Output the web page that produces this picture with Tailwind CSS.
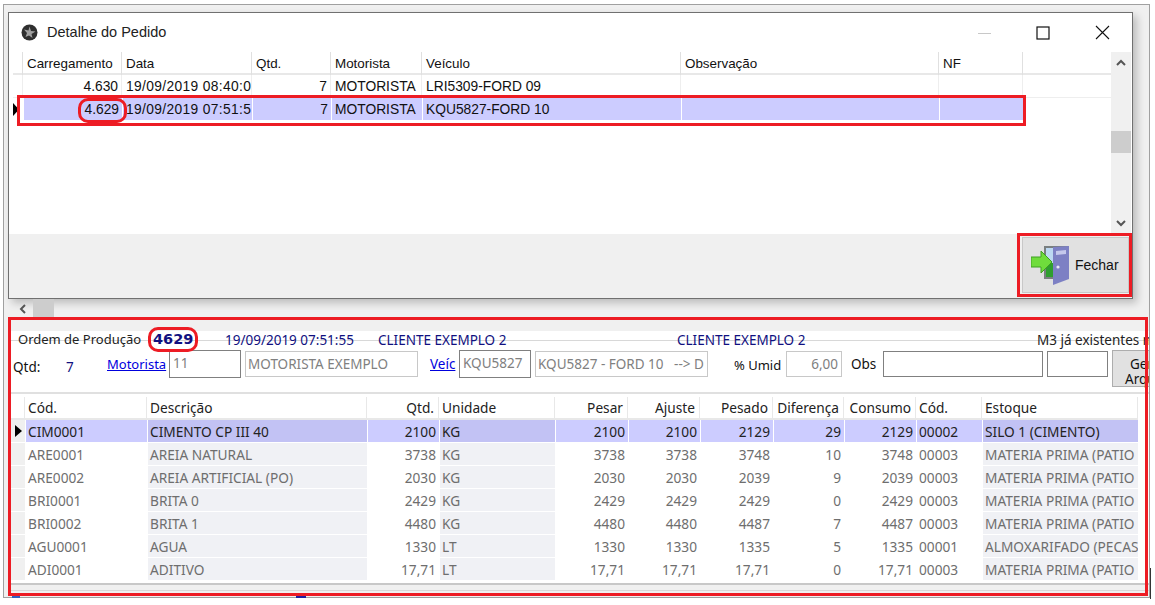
<!DOCTYPE html>
<html lang="pt">
<head>
  <meta charset="UTF-8">
  <title>Detalhe do Pedido</title>
  <script src="https://cdn.jsdelivr.net/npm/@tailwindcss/browser@4"></script>
</head>
<body class="relative w-[1155px] h-[605px] overflow-hidden bg-white font-['Liberation_Sans',sans-serif] text-[#111]">
  <!-- outer frame -->
  <div class="ml-[3px] mt-[4px] w-[1147px] h-[594px] border border-[#a0a0a0] bg-[#f0f0f0] overflow-hidden">
    <!-- dialog -->
    <div class="ml-[4px] mt-[7px] w-[1125px] h-[287px] border border-[#707070] bg-white shadow-[4px_4px_8px_rgba(0,0,0,0.22)] flex flex-col">
      <div class="h-[39px] flex items-center shrink-0 whitespace-nowrap">
        <svg class="ml-[12px] shrink-0" width="17" height="17" viewBox="0 0 17 17"><circle cx="8.5" cy="8.5" r="8" fill="#2f2f2f"/><path d="M8.5 2.5 L10 7 L14.5 7.5 L10.5 10 L11.5 14 L8 11.5 L4.5 13 L6 9 L3 5.5 L7.5 6.5Z" fill="#a0a0a0"/></svg>
        <span class="ml-[9px] text-[14.5px] text-[#222]">Detalhe do Pedido</span>
        <div class="ml-auto mr-[22px] flex items-center shrink-0">
          <svg class="shrink-0" width="14" height="14" viewBox="0 0 14 14"><path d="M0 7.5H13" stroke="#c8c8c8" fill="none"/></svg>
          <svg class="ml-[44px] shrink-0" width="14" height="14" viewBox="0 0 14 14"><rect x="1" y="1" width="12" height="12" fill="none" stroke="#111" stroke-width="1.2"/></svg>
          <svg class="ml-[45px] shrink-0" width="15" height="15" viewBox="0 0 15 15"><path d="M1 1L14 14M14 1L1 14" stroke="#111" stroke-width="1.1" fill="none"/></svg>
        </div>
      </div>
      <!-- top grid -->
      <div class="h-[182px] flex shrink-0 text-[13.8px] leading-[24px]">
        <div class="w-[1102px] pl-[4px]">
          <div class="grid grid-cols-[10px_98px_129px_78px_90px_258px_257px_83px] gap-x-px h-[23px] text-[13.4px] border-b-2 border-[#e8e8e8] [&>*]:px-[3px] [&>*]:border-r [&>*]:border-[#e0e0e0]">
            <span></span><span>Carregamento</span><span>Data</span><span>Qtd.</span><span>Motorista</span><span>Veículo</span><span>Observação</span><span>NF</span>
          </div>
          <div class="grid grid-cols-[10px_98px_129px_78px_90px_258px_257px_83px] gap-x-px h-[23px] border-b border-[#eeeeee] [&>*]:px-[3px] [&>*]:whitespace-nowrap [&>*]:overflow-hidden [&>*]:border-r [&>*]:border-[#eeeeee]">
            <span></span><span class="text-right">4.630</span><span class="tracking-[0.35px]">19/09/2019 08:40:0</span><span class="text-right">7</span><span>MOTORISTA</span><span>LRI5309-FORD 09</span><span></span><span></span>
          </div>
          <div class="grid grid-cols-[10px_98px_129px_78px_90px_258px_257px_83px] gap-x-px h-[22px] [&>*]:px-[3px] [&>*]:whitespace-nowrap [&>*]:overflow-hidden">
            <span class="!px-0 bg-white flex items-center"><svg class="ml-[-1px]" width="7" height="15" viewBox="0 0 7 15"><path d="M0 0L7 7.5L0 15Z" fill="#000"/></svg></span>
            <span class="bg-[#ccccff] text-right">4.629</span><span class="bg-[#ccccff] tracking-[0.35px]">19/09/2019 07:51:5</span><span class="bg-[#ccccff] text-right">7</span><span class="bg-[#ccccff]">MOTORISTA</span><span class="bg-[#ccccff]">KQU5827-FORD 10</span><span class="bg-[#ccccff]"></span><span class="bg-[#ccccff]"></span>
          </div>
        </div>
        <!-- vertical scrollbar -->
        <div class="w-[20px] bg-[#f0f0f0] flex flex-col items-center justify-between py-[7px] relative">
          <svg width="10" height="7" viewBox="0 0 10 7"><path d="M1 6L5 2L9 6" stroke="#555" stroke-width="2" fill="none"/></svg>
          <div class="absolute top-[79px] left-0 w-[20px] h-[22px] bg-[#cdcdcd]"></div>
          <svg width="10" height="7" viewBox="0 0 10 7"><path d="M1 1L5 5L9 1" stroke="#555" stroke-width="2" fill="none"/></svg>
        </div>
      </div>
      <!-- bottom bar -->
      <div class="flex-1 bg-[#f0f0f0] flex justify-end">
        <div class="w-[107px] h-[56px] mt-[3px] mr-[3px] bg-[#e1e1e1] border border-[#c8c8c8] flex items-center text-[14px]">
          <svg class="ml-[8px]" width="40" height="40" viewBox="0 0 40 40">
            <path d="M13 1H38V34H13Z" fill="#7a7f80"/>
            <path d="M15 3H25V32H15Z" fill="#bcd8f2"/>
            <path d="M15 18H25V32H15Z" fill="#2f9e2f"/>
            <path d="M22 2L38 1V34L22 40Z" fill="#7d80c4"/>
            <path d="M25 6L35 5V9L25 10Z" fill="#c5c8ec"/>
            <circle cx="27" cy="22" r="1.6" fill="#e8e8f5"/>
            <path d="M0 12H10V6L21 17L10 28V22H0Z" fill="#6fdc3c" stroke="#3f9f22"/>
          </svg>
          <span class="ml-[4px]">Fechar</span>
        </div>
      </div>
    </div>
    <!-- horizontal scrollbar -->
    <div class="h-[19px] flex items-center ml-[4px]">
      <svg class="ml-[11px]" width="7" height="10" viewBox="0 0 7 10"><path d="M6 1L2 5L6 9" stroke="#555" stroke-width="2" fill="none"/></svg>
      <div class="ml-[7px] w-[21px] h-[19px] bg-[#cdcdcd]"></div>
    </div>
    <!-- production panel -->
    <div class="relative h-[266px] bg-white ml-[4px] text-[13.5px] font-['Noto_Sans',sans-serif]">
      <div class="h-[13px] bg-[#f0f0f0]"></div>
      <div class="absolute left-0 right-0 top-[22px] h-px bg-[#d8d8d8]"></div>
      <div class="relative flex h-[18px] items-center pl-[10px] whitespace-nowrap text-[#101080] overflow-hidden">
        <span class="w-[135px] shrink-0 text-[13px] text-[#222]">Ordem de Produção</span>
        <span class="w-[72px] shrink-0 font-bold text-[14.5px] font-['DejaVu_Sans',sans-serif] text-[#101080]">4629</span>
        <span class="w-[153px] shrink-0">19/09/2019 07:51:55</span>
        <span class="w-[299px] shrink-0">CLIENTE EXEMPLO 2</span>
        <span class="w-[360px] shrink-0">CLIENTE EXEMPLO 2</span>
        <span class="text-[#222]">M3 já existentes n</span>
      </div>
      <div class="flex h-[28px] pl-[5px] items-start mt-[1px] whitespace-nowrap leading-[28px]">
        <span class="w-[53px] shrink-0 pt-[3px]">Qtd:</span>
        <span class="w-[41px] shrink-0 pt-[3px] text-[#101080]">7</span>
        <a class="w-[62px] shrink-0 text-[13px] text-[#0000dd] underline">Motorista</a>
        <span class="w-[72px] h-[28px] shrink-0 border border-[#808080] px-[3px] text-[#808080] leading-[25px]">11</span>
        <span class="ml-[4px] mt-[1px] w-[173px] h-[26px] shrink-0 border border-[#c8c8c8] px-[2px] text-[#808080] leading-[24px]">MOTORISTA EXEMPLO</span>
        <a class="ml-[12px] w-[29px] shrink-0 text-[#0000dd] underline">Veíc</a>
        <span class="w-[72px] h-[28px] shrink-0 border border-[#808080] px-[3px] text-[#808080] leading-[25px]">KQU5827</span>
        <span class="ml-[4px] mt-[1px] w-[173px] h-[26px] shrink-0 border border-[#c8c8c8] px-[2px] text-[#808080] leading-[24px] overflow-hidden">KQU5827 - FORD 10 &nbsp; --&gt; D</span>
        <span class="ml-[26px] w-[52px] shrink-0 text-[13px] pt-[1px]">% Umid</span>
        <span class="mt-[1px] w-[56px] h-[26px] shrink-0 border border-[#c8c8c8] px-[3px] text-right text-[#808080] leading-[24px]">6,00</span>
        <span class="ml-[9px] w-[32px] shrink-0">Obs</span>
        <span class="mt-[1px] w-[160px] h-[26px] shrink-0 border border-[#808080]"></span>
        <span class="ml-[4px] mt-[1px] w-[61px] h-[26px] shrink-0 border border-[#808080]"></span>
        <span class="ml-[4px] w-[60px] h-[37px] shrink-0 border border-[#adadad] bg-[#e1e1e1] text-center leading-[15px] pt-[6px] pl-[12px]">Gerar<br>Arquivo</span>
      </div>
      <div class="h-[2px] mt-[14px] bg-[#e0e0e0]"></div>
      <!-- lower grid -->
      <div class="ml-[3px] mt-[1px] w-[1127px] text-[13.7px] leading-[22px] whitespace-nowrap text-[#6e6e6e]">
        <div class="grid grid-cols-[14px_121px_219px_71px_115px_72px_71px_72px_70px_71px_65px_155px] gap-x-px h-[25px] text-[#222] pt-[2px] border-b-2 border-[#e8e8e8] [&>*]:pl-[2px] [&>*]:pr-[4px] [&>*]:border-r [&>*]:border-[#e8e8e8]">
          <span></span><span>Cód.</span><span>Descrição</span><span class="text-right">Qtd.</span><span>Unidade</span><span class="text-right">Pesar</span><span class="text-right">Ajuste</span><span class="text-right">Pesado</span><span class="text-right">Diferença</span><span class="text-right">Consumo</span><span>Cód.</span><span>Estoque</span>
        </div>
        <div class="grid grid-cols-[14px_121px_219px_71px_115px_72px_71px_72px_70px_71px_65px_155px] gap-x-px gap-y-px auto-rows-[22px] leading-[23px] [&>*]:pl-[2px] [&>*]:pr-[3px] [&>*]:overflow-hidden">
          <span class="!px-0 flex items-center justify-center bg-[#f0f0f0]"><svg width="7" height="12" viewBox="0 0 7 12"><path d="M0 0L7 6L0 12Z" fill="#000"/></svg></span>
          <span class="bg-[#ccccff] text-[#222]">CIM0001</span><span class="bg-[#c2c2f4] text-[#222]">CIMENTO CP III 40</span><span class="bg-[#ccccff] text-[#222] text-right">2100</span><span class="bg-[#c2c2f4] text-[#222]">KG</span><span class="bg-[#ccccff] text-[#222] text-right">2100</span><span class="bg-[#ccccff] text-[#222] text-right">2100</span><span class="bg-[#ccccff] text-[#222] text-right">2129</span><span class="bg-[#ccccff] text-[#222] text-right">29</span><span class="bg-[#ccccff] text-[#222] text-right">2129</span><span class="bg-[#ccccff] text-[#222]">00002</span><span class="bg-[#c2c2f4] text-[#222]">SILO 1 (CIMENTO)</span>

          <span class="bg-[#f0f0f0]"></span><span>ARE0001</span><span class="bg-[#f0f1f5]">AREIA NATURAL</span><span class="text-right">3738</span><span class="bg-[#f0f1f5]">KG</span><span class="text-right">3738</span><span class="text-right">3738</span><span class="text-right">3748</span><span class="text-right">10</span><span class="text-right">3748</span><span>00003</span><span class="bg-[#f0f1f5]">MATERIA PRIMA (PATIO</span>

          <span class="bg-[#f0f0f0]"></span><span>ARE0002</span><span class="bg-[#f0f1f5]">AREIA ARTIFICIAL (PO)</span><span class="text-right">2030</span><span class="bg-[#f0f1f5]">KG</span><span class="text-right">2030</span><span class="text-right">2030</span><span class="text-right">2039</span><span class="text-right">9</span><span class="text-right">2039</span><span>00003</span><span class="bg-[#f0f1f5]">MATERIA PRIMA (PATIO</span>

          <span class="bg-[#f0f0f0]"></span><span>BRI0001</span><span class="bg-[#f0f1f5]">BRITA 0</span><span class="text-right">2429</span><span class="bg-[#f0f1f5]">KG</span><span class="text-right">2429</span><span class="text-right">2429</span><span class="text-right">2429</span><span class="text-right">0</span><span class="text-right">2429</span><span>00003</span><span class="bg-[#f0f1f5]">MATERIA PRIMA (PATIO</span>

          <span class="bg-[#f0f0f0]"></span><span>BRI0002</span><span class="bg-[#f0f1f5]">BRITA 1</span><span class="text-right">4480</span><span class="bg-[#f0f1f5]">KG</span><span class="text-right">4480</span><span class="text-right">4480</span><span class="text-right">4487</span><span class="text-right">7</span><span class="text-right">4487</span><span>00003</span><span class="bg-[#f0f1f5]">MATERIA PRIMA (PATIO</span>

          <span class="bg-[#f0f0f0]"></span><span>AGU0001</span><span class="bg-[#f0f1f5]">AGUA</span><span class="text-right">1330</span><span class="bg-[#f0f1f5]">LT</span><span class="text-right">1330</span><span class="text-right">1330</span><span class="text-right">1335</span><span class="text-right">5</span><span class="text-right">1335</span><span>00001</span><span class="bg-[#f0f1f5]">ALMOXARIFADO (PECAS</span>

          <span class="bg-[#f0f0f0]"></span><span>ADI0001</span><span class="bg-[#f0f1f5]">ADITIVO</span><span class="text-right">17,71</span><span class="bg-[#f0f1f5]">LT</span><span class="text-right">17,71</span><span class="text-right">17,71</span><span class="text-right">17,71</span><span class="text-right">0</span><span class="text-right">17,71</span><span>00003</span><span class="bg-[#f0f1f5]">MATERIA PRIMA (PATIO</span>
        </div>
      </div>
      <div class="h-[2px] mt-[3px] bg-[#c8c8c8]"></div>
      <div class="h-[1px] mt-[5px] bg-[#d8d8d8]"></div>
    </div>
  </div>

  <!-- red annotations -->
  <div class="absolute left-[17px] top-[95px] w-[1009px] h-[31px] border-[3px] border-[#ed1c24]"></div>
  <div class="absolute left-[78px] top-[98px] w-[49px] h-[25px] border-[3px] border-[#ed1c24] rounded-[10px]"></div>
  <div class="absolute left-[1017px] top-[233px] w-[115px] h-[64px] border-[3px] border-[#ed1c24]"></div>
  <div class="absolute left-[8px] top-[317px] w-[1140px] h-[279px] border-[3px] border-[#ed1c24]"></div>
  <div class="absolute left-[148px] top-[327px] w-[50px] h-[25px] border-[3px] border-[#ed1c24] rounded-[10px]"></div>
  <!-- bits of the window behind, showing under the frame -->
  <div class="absolute left-[12px] top-[596px] w-[8px] h-[2px] bg-[#3060c0]"></div>
  <div class="absolute left-[296px] top-[596px] w-[10px] h-[2px] bg-[#2020a0]"></div>
  <div class="absolute left-[1150px] top-[568px] w-px h-[31px] bg-[#333]"></div>
</body>
</html>
